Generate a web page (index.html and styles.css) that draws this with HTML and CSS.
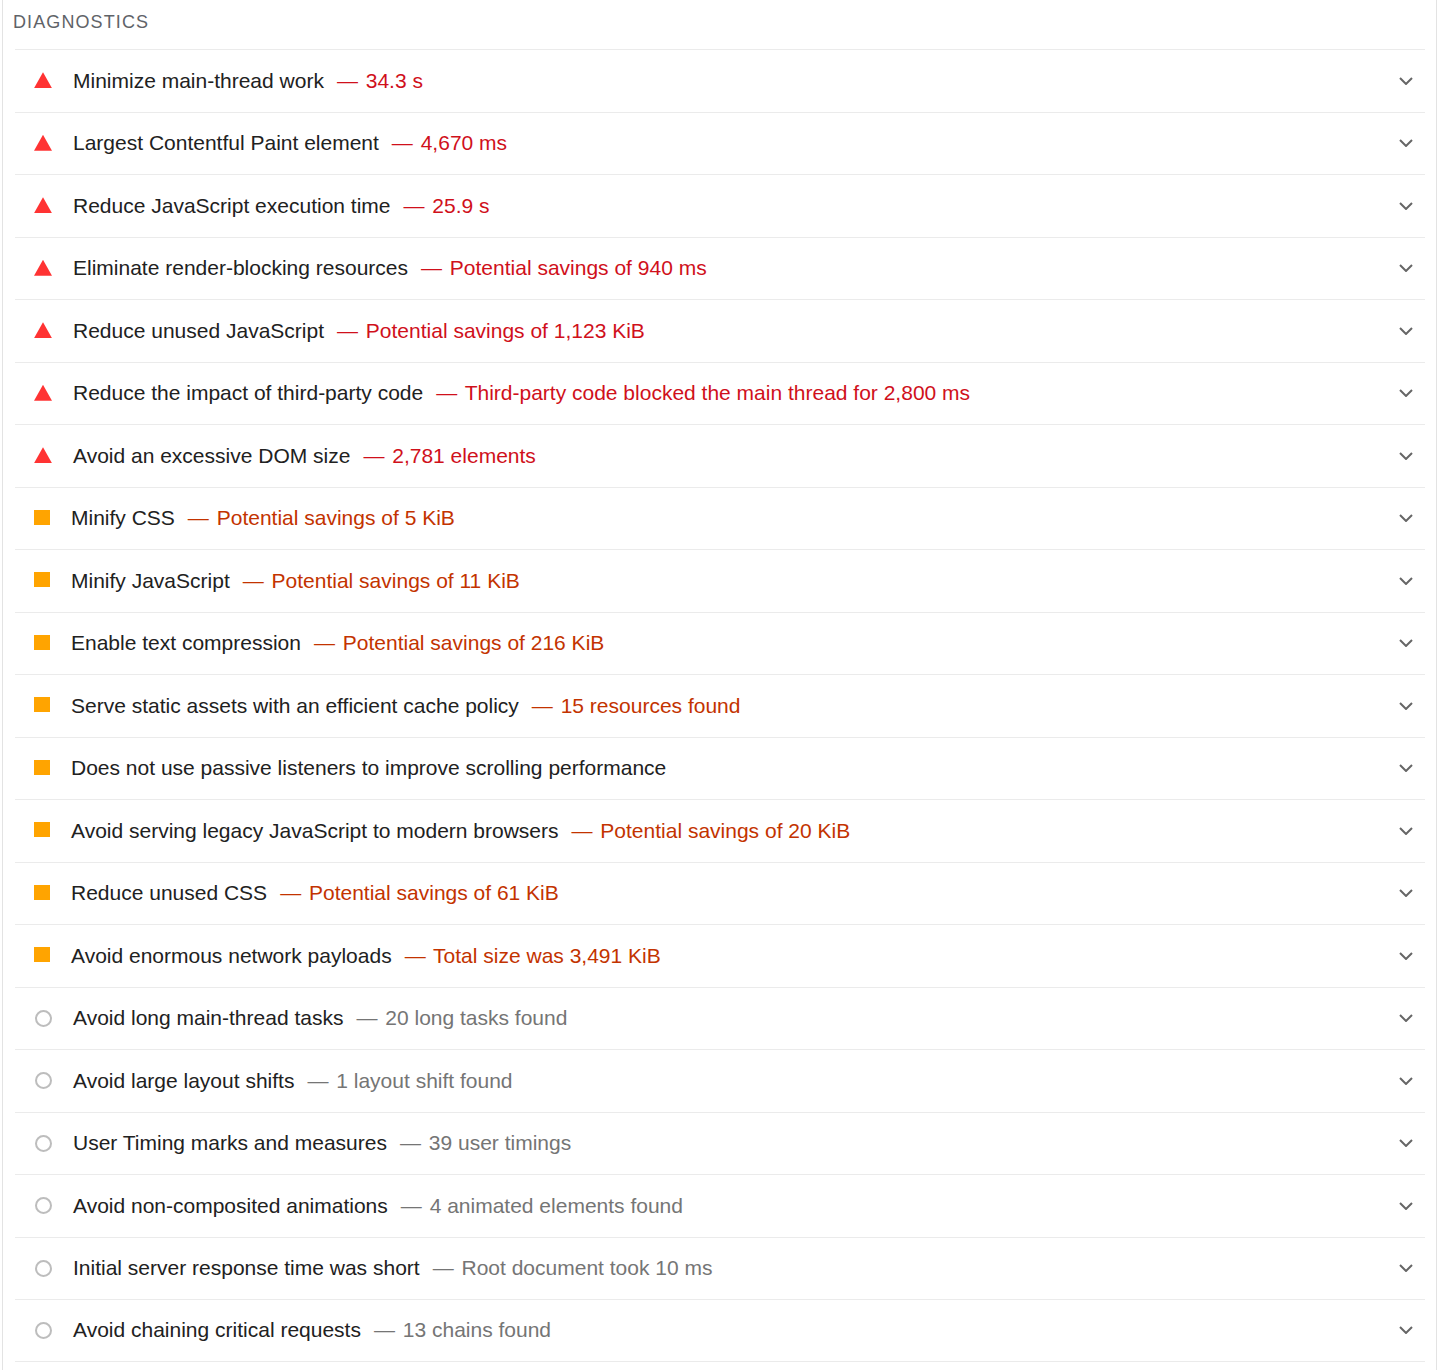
FILE: index.html
```html
<!DOCTYPE html>
<html lang="en">

<head>
    <meta charset="UTF-8">
    <meta name="viewport" content="width=device-width, initial-scale=1.0">
    <title>Diagnostics</title>
    <link rel="stylesheet" href="styles.css">
</head>

<body>

    <div class="panel">
        <div class="group-header">Diagnostics</div>

        <div class="audit-list">
            <div class="audit fail">
                <span class="icon"></span>
                <span class="title">Minimize main-thread work</span>
                <span class="display"><span class="dash">—</span> 34.3 s</span>
                <svg class="chevron" width="14" height="8" viewBox="0 0 14 8"><path d="M1 1l6 6 6-6" /></svg>
            </div>
            <div class="audit fail">
                <span class="icon"></span>
                <span class="title">Largest Contentful Paint element</span>
                <span class="display"><span class="dash">—</span> 4,670 ms</span>
                <svg class="chevron" width="14" height="8" viewBox="0 0 14 8"><path d="M1 1l6 6 6-6" /></svg>
            </div>
            <div class="audit fail">
                <span class="icon"></span>
                <span class="title">Reduce JavaScript execution time</span>
                <span class="display"><span class="dash">—</span> 25.9 s</span>
                <svg class="chevron" width="14" height="8" viewBox="0 0 14 8"><path d="M1 1l6 6 6-6" /></svg>
            </div>
            <div class="audit fail">
                <span class="icon"></span>
                <span class="title">Eliminate render-blocking resources</span>
                <span class="display"><span class="dash">—</span> Potential savings of 940 ms</span>
                <svg class="chevron" width="14" height="8" viewBox="0 0 14 8"><path d="M1 1l6 6 6-6" /></svg>
            </div>
            <div class="audit fail">
                <span class="icon"></span>
                <span class="title">Reduce unused JavaScript</span>
                <span class="display"><span class="dash">—</span> Potential savings of 1,123 KiB</span>
                <svg class="chevron" width="14" height="8" viewBox="0 0 14 8"><path d="M1 1l6 6 6-6" /></svg>
            </div>
            <div class="audit fail">
                <span class="icon"></span>
                <span class="title">Reduce the impact of third-party code</span>
                <span class="display"><span class="dash">—</span> Third-party code blocked the main thread for 2,800 ms</span>
                <svg class="chevron" width="14" height="8" viewBox="0 0 14 8"><path d="M1 1l6 6 6-6" /></svg>
            </div>
            <div class="audit fail">
                <span class="icon"></span>
                <span class="title">Avoid an excessive DOM size</span>
                <span class="display"><span class="dash">—</span> 2,781 elements</span>
                <svg class="chevron" width="14" height="8" viewBox="0 0 14 8"><path d="M1 1l6 6 6-6" /></svg>
            </div>

            <div class="audit average">
                <span class="icon"></span>
                <span class="title">Minify CSS</span>
                <span class="display"><span class="dash">—</span> Potential savings of 5 KiB</span>
                <svg class="chevron" width="14" height="8" viewBox="0 0 14 8"><path d="M1 1l6 6 6-6" /></svg>
            </div>
            <div class="audit average">
                <span class="icon"></span>
                <span class="title">Minify JavaScript</span>
                <span class="display"><span class="dash">—</span> Potential savings of 11 KiB</span>
                <svg class="chevron" width="14" height="8" viewBox="0 0 14 8"><path d="M1 1l6 6 6-6" /></svg>
            </div>
            <div class="audit average">
                <span class="icon"></span>
                <span class="title">Enable text compression</span>
                <span class="display"><span class="dash">—</span> Potential savings of 216 KiB</span>
                <svg class="chevron" width="14" height="8" viewBox="0 0 14 8"><path d="M1 1l6 6 6-6" /></svg>
            </div>
            <div class="audit average">
                <span class="icon"></span>
                <span class="title">Serve static assets with an efficient cache policy</span>
                <span class="display"><span class="dash">—</span> 15 resources found</span>
                <svg class="chevron" width="14" height="8" viewBox="0 0 14 8"><path d="M1 1l6 6 6-6" /></svg>
            </div>
            <div class="audit average">
                <span class="icon"></span>
                <span class="title">Does not use passive listeners to improve scrolling performance</span>
                <svg class="chevron" width="14" height="8" viewBox="0 0 14 8"><path d="M1 1l6 6 6-6" /></svg>
            </div>
            <div class="audit average">
                <span class="icon"></span>
                <span class="title">Avoid serving legacy JavaScript to modern browsers</span>
                <span class="display"><span class="dash">—</span> Potential savings of 20 KiB</span>
                <svg class="chevron" width="14" height="8" viewBox="0 0 14 8"><path d="M1 1l6 6 6-6" /></svg>
            </div>
            <div class="audit average">
                <span class="icon"></span>
                <span class="title">Reduce unused CSS</span>
                <span class="display"><span class="dash">—</span> Potential savings of 61 KiB</span>
                <svg class="chevron" width="14" height="8" viewBox="0 0 14 8"><path d="M1 1l6 6 6-6" /></svg>
            </div>
            <div class="audit average">
                <span class="icon"></span>
                <span class="title">Avoid enormous network payloads</span>
                <span class="display"><span class="dash">—</span> Total size was 3,491 KiB</span>
                <svg class="chevron" width="14" height="8" viewBox="0 0 14 8"><path d="M1 1l6 6 6-6" /></svg>
            </div>

            <div class="audit info">
                <span class="icon"></span>
                <span class="title">Avoid long main-thread tasks</span>
                <span class="display"><span class="dash">—</span> 20 long tasks found</span>
                <svg class="chevron" width="14" height="8" viewBox="0 0 14 8"><path d="M1 1l6 6 6-6" /></svg>
            </div>
            <div class="audit info">
                <span class="icon"></span>
                <span class="title">Avoid large layout shifts</span>
                <span class="display"><span class="dash">—</span> 1 layout shift found</span>
                <svg class="chevron" width="14" height="8" viewBox="0 0 14 8"><path d="M1 1l6 6 6-6" /></svg>
            </div>
            <div class="audit info">
                <span class="icon"></span>
                <span class="title">User Timing marks and measures</span>
                <span class="display"><span class="dash">—</span> 39 user timings</span>
                <svg class="chevron" width="14" height="8" viewBox="0 0 14 8"><path d="M1 1l6 6 6-6" /></svg>
            </div>
            <div class="audit info">
                <span class="icon"></span>
                <span class="title">Avoid non-composited animations</span>
                <span class="display"><span class="dash">—</span> 4 animated elements found</span>
                <svg class="chevron" width="14" height="8" viewBox="0 0 14 8"><path d="M1 1l6 6 6-6" /></svg>
            </div>
            <div class="audit info">
                <span class="icon"></span>
                <span class="title">Initial server response time was short</span>
                <span class="display"><span class="dash">—</span> Root document took 10 ms</span>
                <svg class="chevron" width="14" height="8" viewBox="0 0 14 8"><path d="M1 1l6 6 6-6" /></svg>
            </div>
            <div class="audit info">
                <span class="icon"></span>
                <span class="title">Avoid chaining critical requests</span>
                <span class="display"><span class="dash">—</span> 13 chains found</span>
                <svg class="chevron" width="14" height="8" viewBox="0 0 14 8"><path d="M1 1l6 6 6-6" /></svg>
            </div>
        </div>
    </div>

</body>

</html>
```

FILE: styles.css
```css
* {
    margin: 0;
    padding: 0;
    box-sizing: border-box;
    font-family: "Liberation Sans", Arial, sans-serif;
}

body {
    background-color: #fff;
    color: #212121;
}

.panel {
    min-height: 100vh;
    margin: 0 3px 0 2px;
    border-left: 1px solid #e3e3e3;
    border-right: 1px solid #e3e3e3;
    padding: 0 11px 0 12px;
}

.group-header {
    font-size: 18px;
    line-height: 24px;
    letter-spacing: 1.1px;
    text-transform: uppercase;
    color: #5f6368;
    padding: 10px 0 15px 0;
    margin-left: -2px;
}

.audit {
    display: flex;
    align-items: center;
    height: 62.5px;
    padding: 0 12px 0 19px;
    border-top: 1px solid #ebebeb;
    font-size: 21px;
    line-height: 24px;
}

.audit:last-child {
    border-bottom: 1px solid #ebebeb;
}

.icon {
    flex-shrink: 0;
    margin-right: 21px;
}

.title {
    white-space: nowrap;
}

.display {
    margin-left: 13px;
    white-space: nowrap;
}

.dash {
    margin-right: 2px;
}

.chevron {
    margin-left: auto;
    fill: none;
    stroke: #666;
    stroke-width: 2;
}

/* fail: red triangle */
.fail .icon {
    width: 18px;
    height: 16px;
    background-color: #f33;
    clip-path: polygon(50% 0, 100% 100%, 0 100%);
    margin-top: -1px;
}

.fail .display {
    color: #d0101b;
}

/* average: orange square */
.average .icon {
    width: 16px;
    height: 15px;
    background-color: #ffa400;
    margin-top: -2px;
}

.average .display {
    color: #c33300;
}

/* informative: gray circle */
.info .icon {
    width: 17px;
    height: 17px;
    border: 2px solid #bdbdbd;
    border-radius: 50%;
    margin-left: 1px;
    margin-right: 21px;
}

.info .display {
    color: #757575;
}
```
